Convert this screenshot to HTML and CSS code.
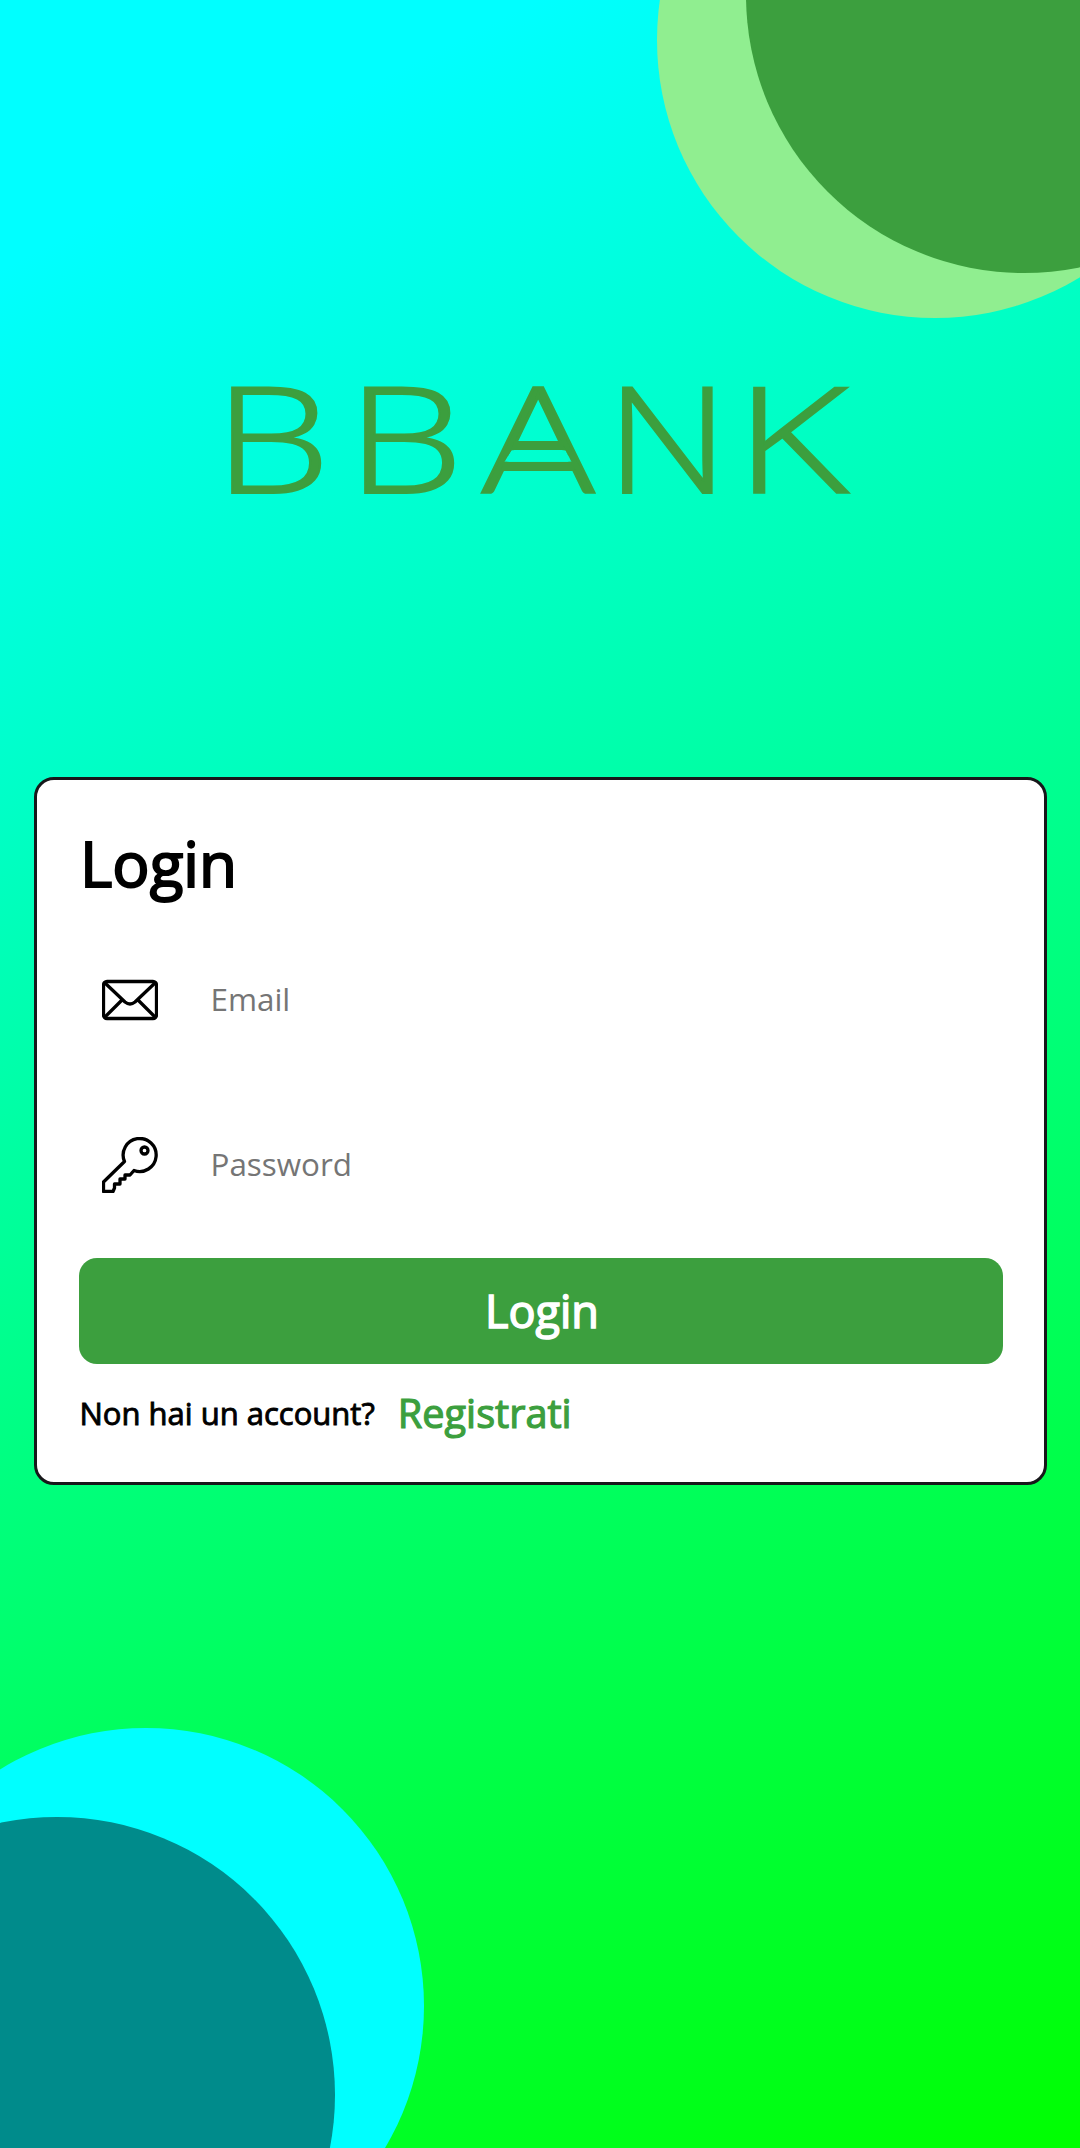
FILE: index.html
```html
<!DOCTYPE html>
<html lang="it">
<head>
<meta charset="utf-8">
<title>BBANK - Login</title>
<link rel="stylesheet" href="styles.css">
</head>
<body>
<main class="page">
  <div class="circle circle-light"></div>
  <div class="circle circle-green"></div>
  <div class="circle circle-cyan"></div>
  <div class="circle circle-teal"></div>
  <svg class="logo" viewBox="0 0 624 110" role="img" aria-label="BBANK"><clipPath id="gap"><path clip-rule="evenodd" d="M240 -5H380V120H240ZM283.500 65.200H337.500L343.500 76.800H276.500Z"/></clipPath><text class="letter" transform="translate(-14.5 108) scale(1.26 1)">B</text><text class="letter" transform="translate(118.500 108) scale(1.26 1)">B</text><g clip-path="url(#gap)"><text class="letter letter-a" transform="translate(252.3 107.5) scale(1.21 1.01)">A</text></g><text class="letter" transform="translate(378 108) scale(1.15 1)">N</text><text class="letter" transform="translate(506.5 108) scale(1.33 1)">K</text><path class="bar" d="M286 60.500H335M275 81.500H345"/></svg>
  <form class="card">
    <h1 class="title">Login</h1>
    <label class="field">
      <svg class="icon" viewBox="0 0 56 56"><rect x="1.5" y="9.5" width="53" height="37" rx="3.5"/><path d="M3 11L23 30Q28 34 33 30L53 11M3 45L19.500 28.500M53 45L36.500 28.500"/></svg>
      <input class="input" type="email" placeholder="Email">
    </label>
    <label class="field">
      <svg class="icon" viewBox="0 0 56 56"><path d="M22.500 24.500A16.500 16.500 0 1 1 32 33.500L28 38H23V42H18V47H12.500V51L11 54.500H1.500V45Z"/><circle cx="42.500" cy="13.500" r="3.500"/></svg>
      <input class="input" type="password" placeholder="Password">
    </label>
    <button class="submit" type="button">Login</button>
    <p class="signup"><span>Non hai un account?</span><a class="link">Registrati</a></p>
  </form>
</main>
</body>
</html>
```
FILE: styles.css
```css
* { box-sizing: border-box; }
body { margin: 0; font-family: "Open Sans", sans-serif; }
.page {
  position: relative;
  width: 1080px;
  height: 2148px;
  overflow: hidden;
  display: flex;
  flex-direction: column;
  align-items: center;
  padding-top: 385px;
  background: linear-gradient(153.3deg, #0ff 10%, #0f0 100%);
}
.circle { position: absolute; width: 556px; height: 556px; border-radius: 50%; }
.circle-light { left: 657px; top: -238px; background: #90ee90; }
.circle-green { left: 746px; top: -283px; background: #3c9f3e; }
.circle-cyan { left: -132px; top: 1728px; background: #0ff; }
.circle-teal { left: -221px; top: 1817px; background: #008b8b; }
.logo { position: relative; width: 624px; height: 110px; overflow: visible; }
.letter {
  font-family: "Open Sans", sans-serif;
  font-weight: 300;
  font-size: 148px;
  fill: #3c9f3e;
  stroke: #3c9f3e;
  stroke-width: 2px;
  vector-effect: non-scaling-stroke;
}
.letter-a { font-family: Lato, sans-serif; font-size: 146px; stroke-width: 3px; }
.bar { stroke: #3c9f3e; stroke-width: 9; }
.card {
  position: relative;
  width: 1013px;
  height: 708px;
  margin-top: 282px;
  padding: 41px 41px 0 42px;
  border: 3px solid #17171a;
  border-radius: 20px;
  background: #fff;
}
.title {
  margin: 0 0 0 1.5px;
  height: 84px;
  line-height: 84px;
  font-size: 62px;
  font-weight: 400;
  -webkit-text-stroke: 2px #000;
}
.field { display: flex; align-items: center; height: 165px; padding-left: 23px; }
.title + .field { margin-top: 12px; }
.icon { width: 56px; height: 56px; fill: none; stroke: #000; stroke-width: 3.3; stroke-linejoin: round; }
.input {
  flex: 1;
  margin-left: 53px;
  padding: 0 0 2px;
  border: 0;
  outline: 0;
  background: none;
  font: 400 31.4px "Open Sans", sans-serif;
}
.input::placeholder { color: #757575; }
.submit {
  display: block;
  width: 924px;
  height: 106px;
  margin-top: 11px;
  padding: 0 0 2px 3px;
  border: 0;
  border-radius: 18px;
  background: #3c9f3e;
  color: #fff;
  font: 400 45px "Open Sans", sans-serif;
  -webkit-text-stroke: 1.5px #fff;
}
.signup { display: flex; align-items: center; gap: 23px; margin: 22px 0 0 1px; font-size: 31px; -webkit-text-stroke: .9px #000; }
.link { color: #3c9f3e; font-size: 39.7px; -webkit-text-stroke: 1.2px #3c9f3e; }
```
